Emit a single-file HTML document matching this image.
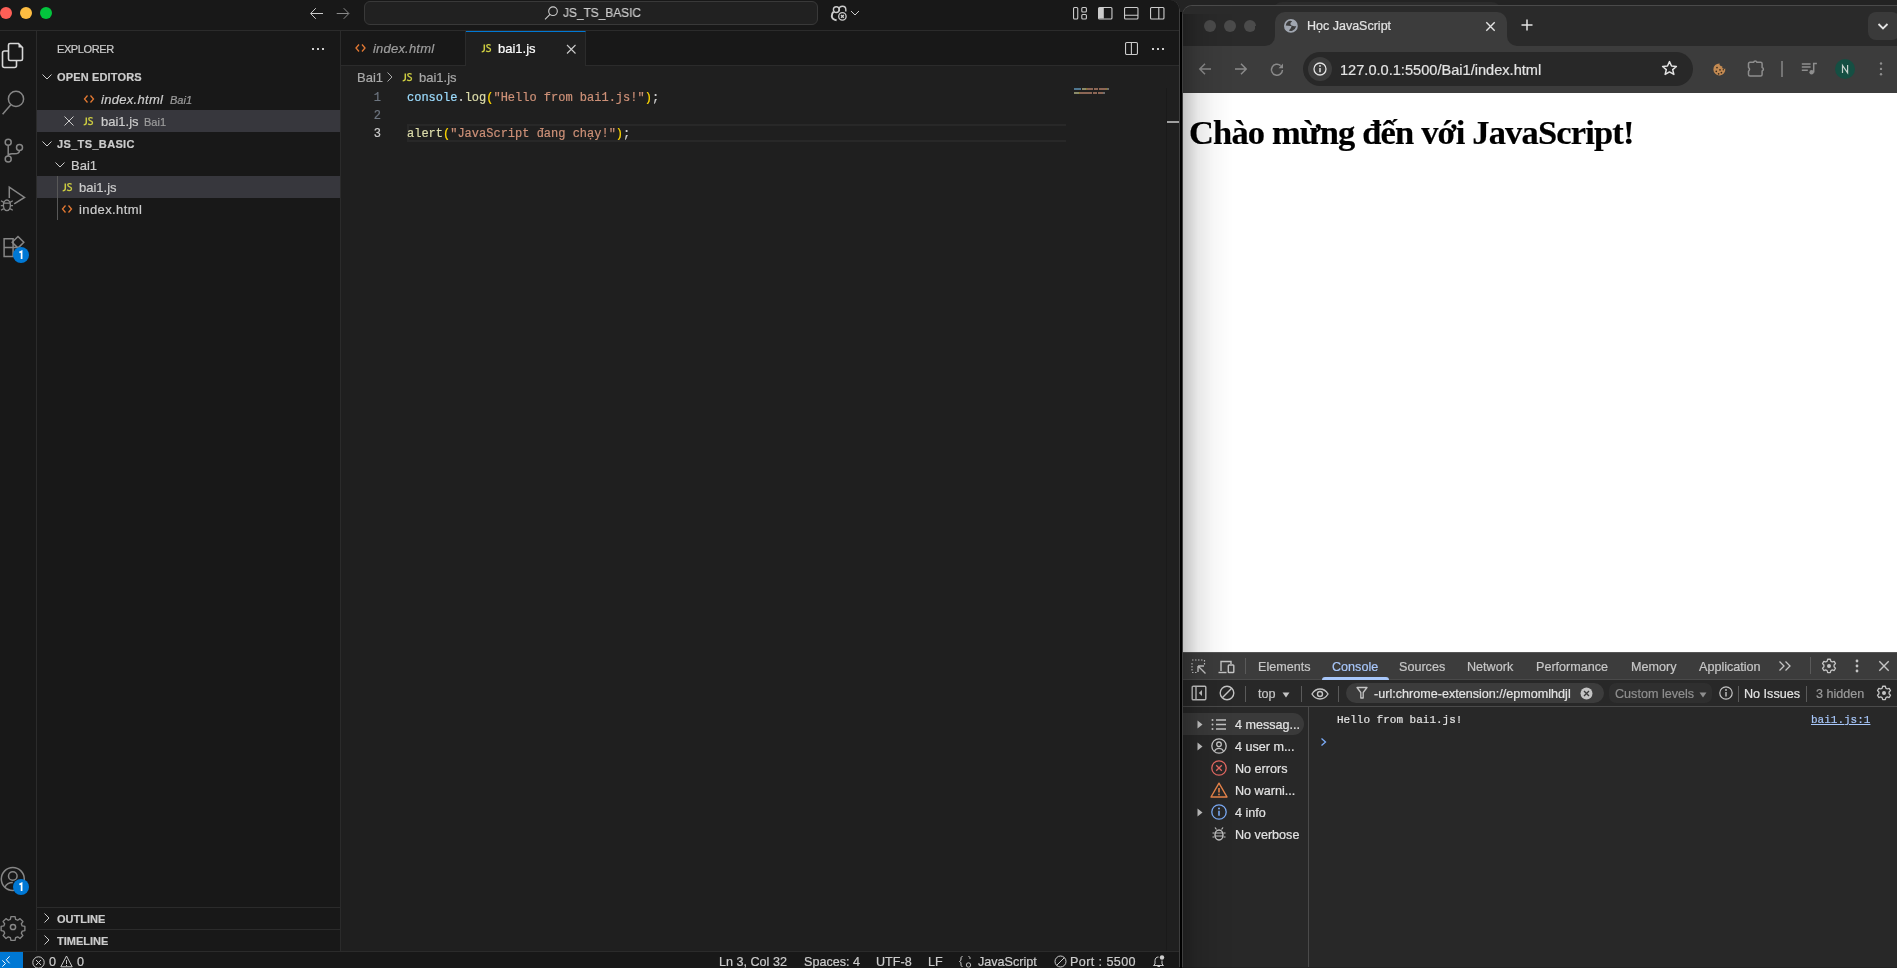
<!DOCTYPE html>
<html><head><meta charset="utf-8">
<style>
*{box-sizing:border-box;margin:0;padding:0}
html,body{width:1897px;height:968px;overflow:hidden;background:#232323;font-family:"Liberation Sans",sans-serif}
.a{position:absolute}
#vs{position:absolute;left:0;top:0;width:1180px;height:968px;background:#181818;overflow:hidden;border-top-right-radius:10px}
.t{position:absolute;white-space:nowrap;will-change:transform;-webkit-text-stroke:0.2px currentColor}
.mono{font-family:"Liberation Mono",monospace}
svg{position:absolute;overflow:visible}
#ch{position:absolute;left:1182px;top:5px;width:715px;height:962px;background:#282828;overflow:hidden;border-top-left-radius:10px;border-left:1px solid #3f3f3f;border-top:1px solid #4a4a4a}
</style></head><body>
<div id="vs">
  <!-- title bar -->
  <div class="a" style="left:0;top:0;width:1180px;height:31px;background:#181818;border-bottom:1px solid #2b2b2b"></div>
  <div class="a" style="left:0px;top:7px;width:12px;height:12px;border-radius:50%;background:#fe5f57"></div>
  <div class="a" style="left:20px;top:7px;width:12px;height:12px;border-radius:50%;background:#fdbd41"></div>
  <div class="a" style="left:40px;top:7px;width:12px;height:12px;border-radius:50%;background:#03c43d"></div>
  <svg style="left:308px;top:6px" width="18" height="16" viewBox="0 0 18 16"><path d="M15 7.5H3M7.8 2.2L2.6 7.5l5.2 5.3" fill="none" stroke="#cccccc" stroke-width="1"/></svg>
  <svg style="left:334px;top:6px" width="18" height="16" viewBox="0 0 18 16"><path d="M2.7 7.5H14.5M9.7 2.2l5.2 5.3-5.2 5.3" fill="none" stroke="#8b8b8b" stroke-width="1"/></svg>
  <div class="a" style="left:364px;top:1px;width:454px;height:24px;border:1px solid #393939;background:#212121;border-radius:6px"></div>
  <svg style="left:543px;top:5px" width="16" height="16" viewBox="0 0 16 16"><circle cx="10" cy="6.2" r="4.3" fill="none" stroke="#cccccc" stroke-width="1.1"/><path d="M7 9.3L2 14.3" stroke="#cccccc" stroke-width="1.1"/></svg>
  <div class="t" style="left:563px;top:5px;font-size:13px;line-height:16px;color:#cccccc;transform:scaleX(0.915);transform-origin:0 0">JS_TS_BASIC</div>
  <!-- copilot -->
  <svg style="left:829px;top:4px" width="20" height="20" viewBox="0 0 20 20"><circle cx="7.3" cy="5.6" r="2.9" fill="none" stroke="#cccccc" stroke-width="1.4"/><path d="M10.2 7.3V5.3Q10.2 2.3 13.5 2.3Q16.8 2.3 16.8 5.6V7.5" fill="none" stroke="#cccccc" stroke-width="1.4"/><path d="M4.6 7.8Q2.6 9.4 2.8 12.3Q3.1 15.6 7.6 16.3" fill="none" stroke="#cccccc" stroke-width="2"/><circle cx="13.4" cy="12.4" r="4.6" fill="#181818"/><circle cx="13.4" cy="12.4" r="3.7" fill="none" stroke="#cccccc" stroke-width="1.3"/><path d="M12 11l2.8 2.8M14.8 11L12 13.8" stroke="#cccccc" stroke-width="1.3"/></svg>
  <svg style="left:850px;top:9px" width="10" height="8" viewBox="0 0 10 8"><path d="M1 2l4 4 4-4" fill="none" stroke="#cccccc" stroke-width="1"/></svg>
  <!-- layout icons -->
  <svg style="left:1072.5px;top:7px" width="14" height="13" viewBox="0 0 14 13"><rect x="0.55" y="0.55" width="4.2" height="11.4" rx="1" fill="none" stroke="#cccccc" stroke-width="1.1"/><rect x="8.8" y="0.55" width="4.6" height="4.5" rx="1" fill="none" stroke="#cccccc" stroke-width="1.1"/><rect x="8.8" y="7.45" width="4.6" height="4.5" rx="1" fill="none" stroke="#cccccc" stroke-width="1.1"/></svg>
  <svg style="left:1098px;top:7px" width="15" height="13" viewBox="0 0 15 13"><rect x="0.55" y="0.55" width="13.4" height="11.4" rx="1" fill="none" stroke="#cccccc" stroke-width="1.1"/><rect x="1" y="1" width="4.8" height="10.5" fill="#cccccc"/></svg>
  <svg style="left:1124px;top:7px" width="15" height="13" viewBox="0 0 15 13"><rect x="0.55" y="0.55" width="13.4" height="11.4" rx="1" fill="none" stroke="#cccccc" stroke-width="1.1"/><path d="M1 8.2h13" stroke="#cccccc" stroke-width="1.1"/></svg>
  <svg style="left:1150px;top:7px" width="15" height="13" viewBox="0 0 15 13"><rect x="0.55" y="0.55" width="13.4" height="11.4" rx="1" fill="none" stroke="#cccccc" stroke-width="1.1"/><path d="M8.8 1v11" stroke="#cccccc" stroke-width="1.1"/></svg>

  <!-- activity bar -->
  <div class="a" style="left:0;top:31px;width:37px;height:920px;background:#181818;border-right:1px solid #2b2b2b"></div>
  <svg style="left:0;top:40px" width="26" height="30" viewBox="0 0 26 30"><path d="M9 11H4.5c-1.2 0-2 .8-2 2v12.5c0 1.2.8 2 2 2h10c1.2 0 2-.8 2-2V21" fill="none" stroke="#d7d7d7" stroke-width="1.6"/><path d="M10 3.5h8.5l4 4v11.5c0 1-.8 1.5-1.5 1.5h-11c-1 0-1.5-.6-1.5-1.5V5c0-1 .6-1.5 1.5-1.5z" fill="none" stroke="#d7d7d7" stroke-width="1.6"/><path d="M18.5 3.5v4h4z" fill="#d7d7d7"/></svg>
  <svg style="left:0;top:88px" width="26" height="28" viewBox="0 0 26 28"><circle cx="16" cy="10.9" r="7.6" fill="none" stroke="#868686" stroke-width="1.5"/><path d="M10.8 16.8L2.6 26.3" stroke="#868686" stroke-width="1.5"/></svg>
  <svg style="left:0.5px;top:136.3px" width="26" height="28" viewBox="0 0 26 28"><circle cx="7.2" cy="6.3" r="3" fill="none" stroke="#868686" stroke-width="1.5"/><circle cx="7.2" cy="23" r="3" fill="none" stroke="#868686" stroke-width="1.5"/><circle cx="18.5" cy="11.4" r="3" fill="none" stroke="#868686" stroke-width="1.5"/><path d="M7.2 9.3V20M18.5 14.4c0 2.5-2 3.3-5 3.3H11c-2 0-3.8 1-3.8 2.3" fill="none" stroke="#868686" stroke-width="1.5"/></svg>
  <svg style="left:0;top:170px" width="30" height="45" viewBox="0 0 30 45"><path d="M9.3 28V17.2l15.2 10.2-10.3 6.4" fill="none" stroke="#868686" stroke-width="1.5" stroke-linejoin="miter"/><ellipse cx="6.9" cy="35.3" rx="3.5" ry="5.3" fill="none" stroke="#868686" stroke-width="1.4"/><path d="M3.5 33.2h6.8M1 30.8l2.8 1.6M12.8 30.8l-2.8 1.6M0.8 35.6h2.6M10.4 35.6H13M1 40.2l2.8-1.6M12.8 40.2L10 38.6" stroke="#868686" stroke-width="1.3"/></svg>
  <svg style="left:0;top:232px" width="28" height="30" viewBox="0 0 28 30"><path d="M4.1 6.8h9v8.8h-9zM4.1 15.6h9v8.8h-9zM13.1 15.6h6" fill="none" stroke="#868686" stroke-width="1.5"/><path d="M18 4.5l5.8 5.8-5.8 5.8-5.8-5.8z" fill="none" stroke="#868686" stroke-width="1.5"/></svg>
  <div class="a" style="left:13px;top:247px;width:16px;height:16px;border-radius:50%;background:#0078d4;"><svg style="left:0;top:0" width="16" height="16" viewBox="0 0 16 16"><path d="M6.3 5.6L8.6 4.4V12" fill="none" stroke="#fff" stroke-width="1.7"/></svg></div>
  <svg style="left:0;top:866px" width="28" height="28" viewBox="0 0 28 28"><circle cx="12.8" cy="13" r="11.5" fill="none" stroke="#868686" stroke-width="1.5"/><circle cx="12.8" cy="10" r="4.3" fill="none" stroke="#868686" stroke-width="1.5"/><path d="M5 21c1.5-3 4.5-4.5 7.8-4.5" fill="none" stroke="#868686" stroke-width="1.5"/></svg>
  <div class="a" style="left:13px;top:879px;width:16px;height:16px;border-radius:50%;background:#0078d4;"><svg style="left:0;top:0" width="16" height="16" viewBox="0 0 16 16"><path d="M6.3 5.6L8.6 4.4V12" fill="none" stroke="#fff" stroke-width="1.7"/></svg></div>
  <svg style="left:0;top:914px" width="26" height="26" viewBox="-13 -13 26 26"><path d="M-2.3 -11.5h4.6l.6 3 2.3 1 2.6-1.8 3.2 3.2-1.8 2.6 1 2.3 3 .6v4.6l-3 .6-1 2.3 1.8 2.6-3.2 3.2-2.6-1.8-2.3 1-.6 3h-4.6l-.6-3-2.3-1-2.6 1.8-3.2-3.2 1.8-2.6-1-2.3-3-.6v-4.6l3-.6 1-2.3-1.8-2.6 3.2-3.2 2.6 1.8 2.3-1z" transform="scale(0.9)" fill="none" stroke="#868686" stroke-width="1.5" stroke-linejoin="round"/><circle cx="0" cy="0" r="2.6" fill="none" stroke="#868686" stroke-width="1.5"/></svg>

  <!-- sidebar -->
  <div class="a" style="left:37px;top:31px;width:304px;height:920px;background:#181818;border-right:1px solid #2b2b2b"></div>
  <div class="t" style="left:57px;top:43px;font-size:11px;line-height:12px;color:#cccccc;letter-spacing:-0.4px">EXPLORER</div>
  <svg style="left:311px;top:45px" width="16" height="8"><rect x="1" y="3" width="2" height="2" fill="#cccccc"/><rect x="6" y="3" width="2" height="2" fill="#cccccc"/><rect x="11" y="3" width="2" height="2" fill="#cccccc"/></svg>
  <svg style="left:41px;top:71px" width="12" height="12" viewBox="0 0 12 12"><path d="M1.5 3.5L6 8l4.5-4.5" fill="none" stroke="#cccccc" stroke-width="1"/></svg>
  <div class="t" style="left:57px;top:71px;font-size:11px;line-height:12px;font-weight:bold;color:#cccccc;letter-spacing:0.15px">OPEN EDITORS</div>
  <svg style="left:83px;top:93px" width="12" height="12" viewBox="0 0 12 12"><path d="M4.5 2.5L1.5 6l3 3.5M7.5 2.5l3 3.5-3 3.5" fill="none" stroke="#e37933" stroke-width="1.3"/></svg>
  <div class="t" style="left:101px;top:92px;font-size:13px;line-height:15px;font-style:italic;color:#cccccc;letter-spacing:0.3px">index.html</div>
  <div class="t" style="left:170px;top:94px;font-size:11px;line-height:12px;font-style:italic;color:#9d9d9d">Bai1</div>
  <div class="a" style="left:37px;top:110px;width:303px;height:22px;background:#37373d"></div>
  <svg style="left:63px;top:115px" width="12" height="12" viewBox="0 0 12 12"><path d="M1.5 1.5l9 9M10.5 1.5l-9 9" stroke="#cccccc" stroke-width="1"/></svg>
  <svg style="left:83px;top:117px" width="11" height="8.5" viewBox="0 0 11 9" preserveAspectRatio="none"><path d="M3.3 0.4V5.8Q3.3 8.2 0.7 8.2" fill="none" stroke="#cbcb41" stroke-width="1.5"/><path d="M9.6 1.4Q8.8 0.5 7.4 0.6Q5.7 0.7 5.8 2.2Q5.9 3.5 7.6 4.1Q9.6 4.8 9.5 6.3Q9.3 8.1 7.3 8.1Q5.9 8.1 5.1 7.2" fill="none" stroke="#cbcb41" stroke-width="1.4"/></svg>
  <div class="t" style="left:101px;top:114px;font-size:13px;line-height:15px;color:#cccccc">bai1.js</div>
  <div class="t" style="left:144px;top:116px;font-size:11px;line-height:12px;color:#9d9d9d">Bai1</div>
  <svg style="left:41px;top:138px" width="12" height="12" viewBox="0 0 12 12"><path d="M1.5 3.5L6 8l4.5-4.5" fill="none" stroke="#cccccc" stroke-width="1"/></svg>
  <div class="t" style="left:57px;top:138px;font-size:11px;line-height:12px;font-weight:bold;color:#cccccc;letter-spacing:0.35px">JS_TS_BASIC</div>
  <svg style="left:54px;top:159px" width="12" height="12" viewBox="0 0 12 12"><path d="M1.5 3.5L6 8l4.5-4.5" fill="none" stroke="#cccccc" stroke-width="1"/></svg>
  <div class="t" style="left:71px;top:158px;font-size:13px;line-height:15px;color:#cccccc">Bai1</div>
  <div class="a" style="left:37px;top:176px;width:303px;height:22px;background:#37373d"></div>
  <div class="a" style="left:57px;top:176px;width:1px;height:44px;background:#585858"></div>
  <svg style="left:62px;top:183px" width="11" height="8.5" viewBox="0 0 11 9" preserveAspectRatio="none"><path d="M3.3 0.4V5.8Q3.3 8.2 0.7 8.2" fill="none" stroke="#cbcb41" stroke-width="1.5"/><path d="M9.6 1.4Q8.8 0.5 7.4 0.6Q5.7 0.7 5.8 2.2Q5.9 3.5 7.6 4.1Q9.6 4.8 9.5 6.3Q9.3 8.1 7.3 8.1Q5.9 8.1 5.1 7.2" fill="none" stroke="#cbcb41" stroke-width="1.4"/></svg>
  <div class="t" style="left:79px;top:180px;font-size:13px;line-height:15px;color:#cccccc">bai1.js</div>
  <svg style="left:61px;top:203px" width="12" height="12" viewBox="0 0 12 12"><path d="M4.5 2.5L1.5 6l3 3.5M7.5 2.5l3 3.5-3 3.5" fill="none" stroke="#e37933" stroke-width="1.3"/></svg>
  <div class="t" style="left:79px;top:202px;font-size:13px;line-height:15px;color:#cccccc;letter-spacing:0.4px">index.html</div>
  <div class="a" style="left:37px;top:907px;width:303px;height:1px;background:#2b2b2b"></div>
  <svg style="left:41px;top:912px" width="12" height="12" viewBox="0 0 12 12"><path d="M3.5 1.5L8 6l-4.5 4.5" fill="none" stroke="#cccccc" stroke-width="1"/></svg>
  <div class="t" style="left:57px;top:913px;font-size:11px;line-height:12px;font-weight:bold;color:#cccccc">OUTLINE</div>
  <div class="a" style="left:37px;top:929px;width:303px;height:1px;background:#2b2b2b"></div>
  <svg style="left:41px;top:934px" width="12" height="12" viewBox="0 0 12 12"><path d="M3.5 1.5L8 6l-4.5 4.5" fill="none" stroke="#cccccc" stroke-width="1"/></svg>
  <div class="t" style="left:57px;top:935px;font-size:11px;line-height:12px;font-weight:bold;color:#cccccc">TIMELINE</div>

  <!-- editor -->
  <div class="a" style="left:341px;top:31px;width:839px;height:920px;background:#1f1f1f"></div>
  <div class="a" style="left:341px;top:31px;width:839px;height:35px;background:#181818;border-bottom:1px solid #2b2b2b"></div>
  <div class="a" style="left:341px;top:31px;width:125px;height:34px;border-right:1px solid #2b2b2b"></div>
  <svg style="left:354px;top:42px" width="13" height="12" viewBox="0 0 12 12"><path d="M4.5 2.5L1.5 6l3 3.5M7.5 2.5l3 3.5-3 3.5" fill="none" stroke="#e37933" stroke-width="1.3"/></svg>
  <div class="t" style="left:373px;top:41px;font-size:13px;line-height:15px;font-style:italic;color:#9d9d9d;letter-spacing:0.2px">index.html</div>
  <div class="a" style="left:466px;top:31px;width:120px;height:35px;background:#1f1f1f;border-right:1px solid #2b2b2b;border-top:1px solid #0078d4"></div>
  <svg style="left:481px;top:44px" width="11" height="8.5" viewBox="0 0 11 9" preserveAspectRatio="none"><path d="M3.3 0.4V5.8Q3.3 8.2 0.7 8.2" fill="none" stroke="#cbcb41" stroke-width="1.5"/><path d="M9.6 1.4Q8.8 0.5 7.4 0.6Q5.7 0.7 5.8 2.2Q5.9 3.5 7.6 4.1Q9.6 4.8 9.5 6.3Q9.3 8.1 7.3 8.1Q5.9 8.1 5.1 7.2" fill="none" stroke="#cbcb41" stroke-width="1.4"/></svg>
  <div class="t" style="left:498px;top:41px;font-size:13px;line-height:15px;color:#ffffff">bai1.js</div>
  <svg style="left:565px;top:43px" width="12" height="12" viewBox="0 0 12 12"><path d="M2 2l8.5 8.5M10.5 2L2 10.5" stroke="#cccccc" stroke-width="1.1"/></svg>
  <svg style="left:1125px;top:42px" width="13" height="13" viewBox="0 0 13 13"><rect x="0.55" y="0.55" width="11.9" height="11.9" rx="1.2" fill="none" stroke="#cccccc" stroke-width="1.1"/><path d="M6.4 1v11" stroke="#cccccc" stroke-width="1.1"/></svg>
  <svg style="left:1151px;top:45px" width="16" height="8"><rect x="1" y="3" width="2" height="2" fill="#cccccc"/><rect x="6" y="3" width="2" height="2" fill="#cccccc"/><rect x="11" y="3" width="2" height="2" fill="#cccccc"/></svg>
  <!-- breadcrumbs -->
  <div class="t" style="left:357px;top:70px;font-size:13px;line-height:15px;color:#a9a9a9">Bai1</div>
  <svg style="left:385px;top:71px" width="10" height="12" viewBox="0 0 10 12"><path d="M2.5 1.5L7 6l-4.5 4.5" fill="none" stroke="#a9a9a9" stroke-width="1"/></svg>
  <svg style="left:402px;top:73px" width="11" height="8.5" viewBox="0 0 11 9" preserveAspectRatio="none"><path d="M3.3 0.4V5.8Q3.3 8.2 0.7 8.2" fill="none" stroke="#cbcb41" stroke-width="1.5"/><path d="M9.6 1.4Q8.8 0.5 7.4 0.6Q5.7 0.7 5.8 2.2Q5.9 3.5 7.6 4.1Q9.6 4.8 9.5 6.3Q9.3 8.1 7.3 8.1Q5.9 8.1 5.1 7.2" fill="none" stroke="#cbcb41" stroke-width="1.4"/></svg>
  <div class="t" style="left:419px;top:70px;font-size:13px;line-height:15px;color:#a9a9a9">bai1.js</div>
  <!-- code -->
  <div class="a" style="left:407px;top:124px;width:659px;height:18px;border:2px solid #282828;border-right:none"></div>
  <div class="t mono" style="left:340px;top:89px;width:41px;text-align:right;font-size:12px;line-height:18px;color:#6e7681">1<br>2<br><span style="color:#cccccc">3</span></div>
  <div class="t mono" style="left:407px;top:89px;font-size:12px;line-height:18px;color:#cccccc"><span style="color:#9cdcfe">console</span>.<span style="color:#dcdcaa">log</span><span style="color:#ffd700">(</span><span style="color:#ce9178">"Hello from bai1.js!"</span><span style="color:#ffd700">)</span>;<br><br><span style="color:#dcdcaa">alert</span><span style="color:#ffd700">(</span><span style="color:#ce9178">"JavaScript đang chạy!"</span><span style="color:#ffd700">)</span>;</div>
  <!-- minimap -->
  <div class="a" style="left:1074px;top:88px;width:7px;height:2px;background:#4f7790"></div><div class="a" style="left:1082px;top:88px;width:4px;height:2px;background:#8a8a6a"></div><div class="a" style="left:1086px;top:88px;width:1px;height:2px;background:#8a7a30"></div><div class="a" style="left:1087px;top:88px;width:6px;height:2px;background:#8c6655"></div><div class="a" style="left:1094px;top:88px;width:4px;height:2px;background:#8c6655"></div><div class="a" style="left:1099px;top:88px;width:7px;height:2px;background:#8c6655"></div><div class="a" style="left:1106px;top:88px;width:1px;height:2px;background:#8a7a30"></div><div class="a" style="left:1107px;top:88px;width:2px;height:2px;background:#6e6e6e"></div><div class="a" style="left:1074px;top:92px;width:5px;height:2px;background:#8a8a6a"></div><div class="a" style="left:1079px;top:92px;width:1px;height:2px;background:#8a7a30"></div><div class="a" style="left:1080px;top:92px;width:12px;height:2px;background:#8c6655"></div><div class="a" style="left:1093px;top:92px;width:4px;height:2px;background:#8c6655"></div><div class="a" style="left:1098px;top:92px;width:5px;height:2px;background:#8c6655"></div><div class="a" style="left:1103px;top:92px;width:2px;height:2px;background:#6e6e6e"></div>
  <div class="a" style="left:1166px;top:88px;width:1px;height:863px;background:#1a1a1a"></div>
  <div class="a" style="left:1167px;top:121px;width:13px;height:2px;background:#a0a0a0"></div>
  <!-- status bar -->
  <div class="a" style="left:0;top:951px;width:1180px;height:22px;background:#181818;border-top:1px solid #2b2b2b"></div>
  <div class="a" style="left:0;top:952px;width:23px;height:20px;background:#0078d4"></div>
  <svg style="left:0;top:952px" width="16" height="16" viewBox="0 0 16 16"><path d="M2.3 8.4L5.5 11.5 2.3 14.6M9.6 4.3L6.3 7.8l3.3 3.5" fill="none" stroke="#fff" stroke-width="1"/></svg>
  <svg style="left:31.7px;top:955.5px" width="13" height="13" viewBox="0 0 13 13"><circle cx="6.5" cy="6.5" r="5.7" fill="none" stroke="#cccccc" stroke-width="1"/><path d="M4 4l5 5M9 4l-5 5" stroke="#cccccc" stroke-width="1"/></svg>
  <div class="t" style="left:49px;top:955px;font-size:12.6px;line-height:14px;color:#cccccc">0</div>
  <svg style="left:60px;top:955px" width="13" height="13" viewBox="0 0 13 13"><path d="M6.5 1L12.2 11.8H0.8z" fill="none" stroke="#cccccc" stroke-width="1"/><path d="M6.5 5v4M6.5 10v1" stroke="#cccccc" stroke-width="1"/></svg>
  <div class="t" style="left:77px;top:955px;font-size:12.6px;line-height:14px;color:#cccccc">0</div>
  <div class="t" style="left:719px;top:955px;font-size:12.6px;line-height:14px;color:#cccccc">Ln 3, Col 32</div>
  <div class="t" style="left:804px;top:955px;font-size:12.6px;line-height:14px;color:#cccccc">Spaces: 4</div>
  <div class="t" style="left:876px;top:955px;font-size:12.6px;line-height:14px;color:#cccccc">UTF-8</div>
  <div class="t" style="left:928px;top:955px;font-size:12.6px;line-height:14px;color:#cccccc">LF</div>
  <svg style="left:959px;top:955px" width="13" height="13" viewBox="0 0 13 13"><path d="M3.5 1.5C2 1.5 2 2.5 2 4s-1 2.5-1.5 2.5C1 6.5 2 7 2 9s0 2.5 1.5 2.5M9.5 1.5c1.5 0 1.5 1 1.5 2.5" fill="none" stroke="#cccccc" stroke-width="1"/><circle cx="9.5" cy="10" r="2.2" fill="none" stroke="#cccccc" stroke-width="0.9"/></svg>
  <div class="t" style="left:978px;top:955px;font-size:12.6px;line-height:14px;color:#cccccc">JavaScript</div>
  <svg style="left:1054px;top:955px" width="13" height="13" viewBox="0 0 13 13"><circle cx="6.5" cy="6.5" r="5.5" fill="none" stroke="#cccccc" stroke-width="1"/><path d="M2.6 10.4l7.8-7.8" stroke="#cccccc" stroke-width="1"/></svg>
  <div class="t" style="left:1070px;top:955px;font-size:12.6px;line-height:14px;color:#cccccc;letter-spacing:0.4px">Port : 5500</div>
  <svg style="left:1152px;top:954px" width="14" height="14" viewBox="0 0 14 14"><path d="M3 10V6.5C3 4.3 4.5 3 6.5 3M10 6.5V10l1.5 1.5h-10L3 10M5.5 12.5h2.5" fill="none" stroke="#cccccc" stroke-width="1"/><circle cx="10" cy="3.5" r="2.2" fill="#cccccc"/></svg>
  <div class="a" style="left:1150px;top:0;width:30px;height:968px;border-right:1px solid #3d3d3d;border-top:1px solid #3d3d3d;border-top-right-radius:10px;top:-1px"></div>
</div>

<div id="bgtop" class="a" style="left:1180px;top:0;width:717px;height:12px;background:#232323"></div><div class="a" style="left:1180px;top:12px;width:2px;height:956px;background:#000"></div>
<div class="a" style="left:1274px;top:2px;width:226px;height:10px;background:#2b2b2b;border-radius:8px 8px 0 0"></div>
<div id="ch">
  <!-- tab strip -->
  <div class="a" style="left:0;top:0;width:715px;height:40px;background:#2a2a2a"></div>
  
  <div class="a" style="left:21px;top:14px;width:12px;height:12px;border-radius:50%;background:#4b4b4b"></div>
  <div class="a" style="left:41px;top:14px;width:12px;height:12px;border-radius:50%;background:#4b4b4b"></div>
  <div class="a" style="left:61px;top:14px;width:12px;height:12px;border-radius:50%;background:#4b4b4b"></div>
  <!-- active tab -->
  <div class="a" style="left:92px;top:6px;width:232px;height:40px;background:#3c3c3c;border-radius:10px 10px 0 0"></div>
  <div class="a" style="left:82px;top:30px;width:10px;height:10px;background:#3c3c3c"></div>
  <div class="a" style="left:72px;top:20px;width:20px;height:20px;background:#2a2a2a;border-radius:0 0 10px 0"></div>
  <div class="a" style="left:324px;top:30px;width:10px;height:10px;background:#3c3c3c"></div>
  <div class="a" style="left:324px;top:20px;width:20px;height:20px;background:#2a2a2a;border-radius:0 0 0 10px"></div>
  <svg style="left:101px;top:13px" width="14" height="14" viewBox="0 0 14 14"><circle cx="6.9" cy="6.9" r="6.9" fill="#a0a6b0"/><path d="M1.7 6.6Q2 3.6 4 2.4Q5.8 1.4 8.2 2.2Q6 3.6 6.4 5Q6.9 6.4 8 6.9Q5 7 1.7 6.6Z" fill="#3c3c3c"/><path d="M4.8 11.6Q6.5 12.3 8.3 11.7Q11.3 10.5 12.3 7.2Q10.5 7.5 9.3 7.1Q8.2 6.8 7.6 6.6Q7.3 8.5 6.6 9.5Q5.8 10.6 4.8 11.6Z" fill="#3c3c3c"/></svg>
  <div class="t" style="left:124px;top:12px;font-size:12.5px;line-height:16px;color:#e3e3e3">Học JavaScript</div>
  <svg style="left:302px;top:15px" width="11" height="11" viewBox="0 0 11 11"><path d="M1.3 1.3l8.4 8.4M9.7 1.3l-8.4 8.4" stroke="#e3e3e3" stroke-width="1.4"/></svg>
  <svg style="left:337px;top:12px" width="14" height="14" viewBox="0 0 14 14"><path d="M7 1.5v11M1.5 7h11" stroke="#e3e3e3" stroke-width="1.5"/></svg>
  <div class="a" style="left:685px;top:6px;width:32px;height:28px;background:#3a3a3a;border-radius:8px"></div>
  <svg style="left:693px;top:14px" width="14" height="12" viewBox="0 0 14 12"><path d="M2.5 4l4.5 4.5L11.5 4" fill="none" stroke="#e3e3e3" stroke-width="1.8"/></svg>
  <!-- toolbar -->
  <div class="a" style="left:0;top:40px;width:715px;height:47px;background:#3c3c3c"></div>
  <svg style="left:14px;top:55px" width="16" height="16" viewBox="0 0 16 16"><path d="M14 8H3M8 2.8L2.8 8 8 13.2" fill="none" stroke="#8a8a8a" stroke-width="1.5"/></svg>
  <svg style="left:50px;top:55px" width="16" height="16" viewBox="0 0 16 16"><path d="M2 8h11M8 2.8L13.2 8 8 13.2" fill="none" stroke="#8a8a8a" stroke-width="1.5"/></svg>
  <svg style="left:86px;top:55px" width="16" height="16" viewBox="0 0 16 16"><path d="M13.5 9A5.5 5.5 0 1 1 11.6 4.6" fill="none" stroke="#8a8a8a" stroke-width="1.5"/><path d="M9.6 7.2H14V2.6z" fill="#8a8a8a"/></svg>
  <div class="a" style="left:120px;top:46px;width:390px;height:34px;background:#282828;border-radius:17px"></div>
  <div class="a" style="left:125px;top:51px;width:24px;height:24px;background:#3c3c3c;border-radius:50%"></div>
  <svg style="left:130px;top:56px" width="14" height="14" viewBox="0 0 14 14"><circle cx="7" cy="7" r="6" fill="none" stroke="#e3e3e3" stroke-width="1.3"/><path d="M7 6v4.2" stroke="#e3e3e3" stroke-width="1.5"/><circle cx="7" cy="3.9" r="0.9" fill="#e3e3e3"/></svg>
  <div class="t" style="left:157px;top:55px;font-size:14.6px;line-height:18px;color:#e3e3e3">127.0.0.1:5500/Bai1/index.html</div>
  <svg style="left:478px;top:54px" width="17" height="17" viewBox="0 0 16 16"><path d="M8 1.5l1.9 4.2 4.6.4-3.5 3 1.1 4.5L8 11.2l-4.1 2.4 1.1-4.5-3.5-3 4.6-.4z" fill="none" stroke="#e3e3e3" stroke-width="1.4" stroke-linejoin="round"/></svg>
  <svg style="left:530px;top:57px" width="14" height="14" viewBox="0 0 14 14"><path d="M12.3 5.6A6 6 0 1 1 6.6 0.4A2.2 2.2 0 0 0 9.3 3.2A2 2 0 0 0 12.3 5.6z" fill="#c38a52"/><circle cx="4" cy="4.6" r="0.85" fill="#3a2a1c"/><circle cx="7" cy="6.8" r="0.85" fill="#3a2a1c"/><circle cx="3.3" cy="8.3" r="0.85" fill="#3a2a1c"/><circle cx="8.4" cy="9.6" r="0.85" fill="#3a2a1c"/><circle cx="5.6" cy="10.8" r="0.85" fill="#3a2a1c"/><circle cx="10.3" cy="6.8" r="0.7" fill="#3a2a1c"/></svg>
  <svg style="left:564px;top:53px" width="18" height="19" viewBox="0 0 18 19"><path d="M1.5 4.8Q1.5 3.3 3 3.3H6.6A1.7 1.7 0 0 1 9.9 3.3H13.6Q15.1 3.3 15.1 4.8V8.6A1.7 1.7 0 0 1 15.1 11.9V15.6Q15.1 17.1 13.6 17.1H3Q1.5 17.1 1.5 15.6V12.3Q3.6 10.3 1.5 8.4Z" fill="none" stroke="#8e8e8e" stroke-width="1.5" stroke-linejoin="round"/></svg>
  <div class="a" style="left:598.3px;top:55px;width:1.6px;height:15.5px;background:#747474"></div>
  <svg style="left:618px;top:56px" width="18" height="16" viewBox="0 0 18 16"><path d="M0.8 2h8.8M0.8 5.1h8.8M0.8 8.2h6" stroke="#8e8e8e" stroke-width="1.5"/><path d="M12.7 10.5V1.5h3.2" fill="none" stroke="#8e8e8e" stroke-width="1.5"/><circle cx="10.6" cy="10.3" r="2.2" fill="#8e8e8e"/></svg>
  <div class="a" style="left:652px;top:53px;width:20px;height:20px;background:#154f43;border-radius:50%"></div>
  <svg style="left:652px;top:53px" width="20" height="20" viewBox="0 0 20 20"><path d="M7.5 14V6.4l5.1 7.4V6" fill="none" stroke="#c8d3ce" stroke-width="1.2" stroke-linejoin="miter"/></svg>
  <svg style="left:695px;top:55px" width="6" height="18" viewBox="0 0 6 18"><circle cx="3" cy="2.5" r="1.2" fill="#8e8e8e"/><circle cx="3" cy="7.9" r="1.2" fill="#8e8e8e"/><circle cx="3" cy="13.3" r="1.2" fill="#8e8e8e"/></svg>
  <!-- page -->
  <div class="a" style="left:0;top:87px;width:715px;height:559px;background:#ffffff"></div>
  <div class="t" style="left:6px;top:106px;font-family:'Liberation Serif',serif;font-size:34.5px;line-height:40px;font-weight:bold;color:#000;letter-spacing:-0.85px">Chào mừng đến với JavaScript!</div>
  <!-- devtools -->
  <div class="a" style="left:0;top:646px;width:714px;height:316px;background:#282828"></div>
  <div class="a" style="left:0;top:646px;width:715px;height:28px;background:#3c3c3c;border-bottom:1px solid #4a4a4a;border-top:1px solid #575757"></div>
  <div class="a" style="left:0;top:674px;width:714px;height:27px;background:#282828;border-bottom:1px solid #4a4a4a"></div>
  <div class="a" style="left:125px;top:701px;width:1px;height:262px;background:#4a4a4a"></div>
  <!-- tab row icons -->
  <svg style="left:8px;top:653px" width="16" height="16" viewBox="0 0 16 16"><path d="M1 1h1.5M4 1h1.5M7 1h1.5M10 1h1.5M13.5 1v1.5M1 4v1.5M1 7v1.5M1 10v1.5M1 13.5h1.5M4 13.5h1.5M13.5 4v1.5" stroke="#c4c4c4" stroke-width="1.2"/><path d="M7 7h6M7 7v6M7 7l7.5 7.5" fill="none" stroke="#c4c4c4" stroke-width="1.4"/></svg>
  <svg style="left:35px;top:653px" width="18" height="16" viewBox="0 0 18 16"><path d="M3 12V2.5h10V5" fill="none" stroke="#c4c4c4" stroke-width="1.4"/><path d="M0.5 13.5h8" stroke="#c4c4c4" stroke-width="1.4"/><rect x="10.3" y="6" width="5.5" height="7.5" rx="0.8" fill="none" stroke="#c4c4c4" stroke-width="1.4"/></svg>
  <div class="a" style="left:62px;top:652px;width:1px;height:16px;background:#5a5a5a"></div>
  <div class="t" style="left:75px;top:653px;font-size:12.6px;line-height:16px;color:#c7c7c7">Elements</div>
  <div class="t" style="left:149px;top:653px;font-size:12.6px;line-height:16px;color:#a8c7fa">Console</div>
  <div class="a" style="left:139px;top:671px;width:67px;height:3px;background:#a8c7fa;border-radius:3px 3px 0 0"></div>
  <div class="t" style="left:216px;top:653px;font-size:12.6px;line-height:16px;color:#c7c7c7">Sources</div>
  <div class="t" style="left:284px;top:653px;font-size:12.6px;line-height:16px;color:#c7c7c7">Network</div>
  <div class="t" style="left:353px;top:653px;font-size:12.6px;line-height:16px;color:#c7c7c7">Performance</div>
  <div class="t" style="left:448px;top:653px;font-size:12.6px;line-height:16px;color:#c7c7c7">Memory</div>
  <div class="t" style="left:516px;top:653px;font-size:12.6px;line-height:16px;color:#c7c7c7">Application</div>
  <svg style="left:595px;top:654px" width="14" height="12" viewBox="0 0 14 12"><path d="M1.5 1.5L6 6l-4.5 4.5M7.5 1.5L12 6l-4.5 4.5" fill="none" stroke="#c4c4c4" stroke-width="1.3"/></svg>
  <div class="a" style="left:627px;top:651px;width:1px;height:17px;background:#5a5a5a"></div>
  <svg style="left:638px;top:652px" width="16" height="16" viewBox="-8 -8 16 16"><path transform="scale(0.94)" d="M-1.4 -7.2h2.8l.5 2 1.6.9 2-.6 1.4 2.4-1.5 1.5v1.9l1.5 1.5-1.4 2.4-2-.6-1.6.9-.5 2h-2.8l-.5-2-1.6-.9-2 .6-1.4-2.4 1.5-1.5v-1.9l-1.5-1.5 1.4-2.4 2 .6 1.6-.9z" fill="none" stroke="#c4c4c4" stroke-width="1.4" stroke-linejoin="round"/><circle r="2" fill="#c4c4c4"/></svg>
  <svg style="left:669px;top:652px" width="10" height="16" viewBox="0 0 10 16"><circle cx="5" cy="3" r="1.4" fill="#c4c4c4"/><circle cx="5" cy="8" r="1.4" fill="#c4c4c4"/><circle cx="5" cy="13" r="1.4" fill="#c4c4c4"/></svg>
  <svg style="left:695px;top:654px" width="12" height="12" viewBox="0 0 12 12"><path d="M1.3 1.3l9.4 9.4M10.7 1.3l-9.4 9.4" stroke="#c4c4c4" stroke-width="1.4"/></svg>
  <!-- console toolbar -->
  <svg style="left:8px;top:679px" width="16" height="16" viewBox="0 0 16 16"><rect x="1.2" y="1.2" width="13.6" height="13.6" rx="1" fill="none" stroke="#c4c4c4" stroke-width="1.4"/><path d="M5 1.5v13" stroke="#c4c4c4" stroke-width="1.4"/><path d="M11 5v6L7.8 8z" fill="#c4c4c4"/></svg>
  <svg style="left:36px;top:679px" width="16" height="16" viewBox="0 0 16 16"><circle cx="8" cy="8" r="6.8" fill="none" stroke="#c4c4c4" stroke-width="1.4"/><path d="M3.3 12.7l9.4-9.4" stroke="#c4c4c4" stroke-width="1.4"/></svg>
  <div class="a" style="left:62px;top:680px;width:1px;height:16px;background:#5a5a5a"></div>
  <div class="t" style="left:75px;top:680px;font-size:12.6px;line-height:16px;color:#c7c7c7">top</div>
  <svg style="left:99px;top:686px" width="8" height="6" viewBox="0 0 8 6"><path d="M0.5 0.5h7L4 5.5z" fill="#c4c4c4"/></svg>
  <div class="a" style="left:118px;top:680px;width:1px;height:16px;background:#5a5a5a"></div>
  <svg style="left:128px;top:682px" width="18" height="12" viewBox="0 0 18 12"><path d="M1 6c2-3.3 4.8-5 8-5s6 1.7 8 5c-2 3.3-4.8 5-8 5S3 9.3 1 6z" fill="none" stroke="#c4c4c4" stroke-width="1.4"/><circle cx="9" cy="6" r="2.5" fill="none" stroke="#c4c4c4" stroke-width="1.4"/></svg>
  <div class="a" style="left:155px;top:680px;width:1px;height:16px;background:#5a5a5a"></div>
  <div class="a" style="left:163px;top:677px;width:258px;height:20px;background:#3c3c3c;border-radius:10px"></div>
  <svg style="left:173px;top:680px" width="12" height="13" viewBox="0 0 12 13"><path d="M1 1.5h10L7.2 6.5V12H4.8V6.5z" fill="none" stroke="#c4c4c4" stroke-width="1.3" stroke-linejoin="round"/></svg>
  <div class="a" style="left:191px;top:680px;width:203px;height:16px;overflow:hidden"><div class="t" style="left:0;top:0;font-size:12.6px;line-height:16px;color:#e3e3e3">-url:chrome-extension://epmomlhdjl</div></div>
  <svg style="left:397px;top:681px" width="13" height="13" viewBox="0 0 13 13"><circle cx="6.5" cy="6.5" r="6" fill="#c4c4c4"/><path d="M4 4l5 5M9 4l-5 5" stroke="#3c3c3c" stroke-width="1.4"/></svg>
  <div class="a" style="left:426px;top:677px;width:103px;height:20px;background:#2f2f2f;border-radius:7px"></div>
  <div class="t" style="left:432px;top:680px;font-size:12.6px;line-height:16px;color:#8f8f8f">Custom levels</div>
  <svg style="left:516px;top:686px" width="8" height="6" viewBox="0 0 8 6"><path d="M0.5 0.5h7L4 5.5z" fill="#8f8f8f"/></svg>
  <svg style="left:536px;top:680px" width="14" height="14" viewBox="0 0 14 14"><circle cx="7" cy="7" r="6.2" fill="none" stroke="#c4c4c4" stroke-width="1.2"/><path d="M7 6v4.5" stroke="#c4c4c4" stroke-width="1.4"/><circle cx="7" cy="4" r="0.9" fill="#c4c4c4"/></svg>
  <div class="a" style="left:555px;top:680px;width:1px;height:16px;background:#5a5a5a"></div>
  <div class="t" style="left:561px;top:680px;font-size:12.6px;line-height:16px;color:#e3e3e3">No Issues</div>
  <div class="a" style="left:623px;top:680px;width:1px;height:16px;background:#5a5a5a"></div>
  <div class="t" style="left:633px;top:680px;font-size:12.6px;line-height:16px;color:#9a9a9a">3 hidden</div>
  <svg style="left:693px;top:679px" width="16" height="16" viewBox="-8 -8 16 16"><path transform="scale(0.94)" d="M-1.4 -7.2h2.8l.5 2 1.6.9 2-.6 1.4 2.4-1.5 1.5v1.9l1.5 1.5-1.4 2.4-2-.6-1.6.9-.5 2h-2.8l-.5-2-1.6-.9-2 .6-1.4-2.4 1.5-1.5v-1.9l-1.5-1.5 1.4-2.4 2 .6 1.6-.9z" fill="none" stroke="#c4c4c4" stroke-width="1.4" stroke-linejoin="round"/><circle r="2" fill="#c4c4c4"/></svg>
  <!-- sidebar -->
  <div class="a" style="left:-10px;top:707px;width:131px;height:22px;background:#3a3a3a;border-radius:11px"></div>
  <svg style="left:14px;top:714px" width="6" height="9" viewBox="0 0 6 9"><path d="M0.5 0.5l5 4-5 4z" fill="#c4c4c4"/></svg>
  <svg style="left:28px;top:712px" width="16" height="13" viewBox="0 0 16 13"><path d="M5 2h10M5 6.5h10M5 11h10" stroke="#c4c4c4" stroke-width="1.4"/><circle cx="1.5" cy="2" r="1" fill="#c4c4c4"/><circle cx="1.5" cy="6.5" r="1" fill="#c4c4c4"/><circle cx="1.5" cy="11" r="1" fill="#c4c4c4"/></svg>
  <div class="t" style="left:52px;top:711px;font-size:12.6px;line-height:16px;color:#e3e3e3">4 messag...</div>
  <svg style="left:14px;top:736px" width="6" height="9" viewBox="0 0 6 9"><path d="M0.5 0.5l5 4-5 4z" fill="#c4c4c4"/></svg>
  <svg style="left:28px;top:732px" width="16" height="16" viewBox="0 0 16 16"><circle cx="8" cy="8" r="7.2" fill="none" stroke="#c4c4c4" stroke-width="1.3"/><circle cx="8" cy="6.3" r="2.3" fill="none" stroke="#c4c4c4" stroke-width="1.3"/><path d="M3.5 13c1-1.8 2.6-2.7 4.5-2.7s3.5.9 4.5 2.7" fill="none" stroke="#c4c4c4" stroke-width="1.3"/></svg>
  <div class="t" style="left:52px;top:733px;font-size:12.6px;line-height:16px;color:#e3e3e3">4 user m...</div>
  <svg style="left:28px;top:754px" width="16" height="16" viewBox="0 0 16 16"><circle cx="8" cy="8" r="7.2" fill="none" stroke="#e46962" stroke-width="1.3"/><path d="M5.2 5.2l5.6 5.6M10.8 5.2l-5.6 5.6" stroke="#e46962" stroke-width="1.3"/></svg>
  <div class="t" style="left:52px;top:755px;font-size:12.6px;line-height:16px;color:#e3e3e3">No errors</div>
  <svg style="left:27px;top:776px" width="18" height="16" viewBox="0 0 18 16"><path d="M9 1.2L17 15H1z" fill="none" stroke="#e8844a" stroke-width="1.4" stroke-linejoin="round"/><path d="M9 6v4.5" stroke="#e8844a" stroke-width="1.6"/><circle cx="9" cy="12.5" r="0.9" fill="#e8844a"/></svg>
  <div class="t" style="left:52px;top:777px;font-size:12.6px;line-height:16px;color:#e3e3e3">No warni...</div>
  <svg style="left:14px;top:802px" width="6" height="9" viewBox="0 0 6 9"><path d="M0.5 0.5l5 4-5 4z" fill="#c4c4c4"/></svg>
  <svg style="left:28px;top:798px" width="16" height="16" viewBox="0 0 16 16"><circle cx="8" cy="8" r="7.2" fill="none" stroke="#7cacf8" stroke-width="1.3"/><path d="M8 6.8v5" stroke="#7cacf8" stroke-width="1.6"/><circle cx="8" cy="4.5" r="1" fill="#7cacf8"/></svg>
  <div class="t" style="left:52px;top:799px;font-size:12.6px;line-height:16px;color:#e3e3e3">4 info</div>
  <svg style="left:29px;top:820px" width="14" height="16" viewBox="0 0 14 16"><ellipse cx="7" cy="9" rx="4" ry="5" fill="none" stroke="#c4c4c4" stroke-width="1.4"/><path d="M3 7h8M3 10h8M0.5 7h2M11.5 7h2M0.5 11h2M11.5 11h2M4.5 3.5L3 1.5M9.5 3.5L11 1.5" stroke="#c4c4c4" stroke-width="1.2"/></svg>
  <div class="t" style="left:52px;top:821px;font-size:12.6px;line-height:16px;color:#e3e3e3">No verbose</div>
  <!-- console messages -->
  <div class="t mono" style="left:154px;top:707px;font-size:11px;line-height:14px;color:#e3e3e3">Hello from bai1.js!</div>
  <div class="t mono" style="left:628px;top:707px;font-size:11px;line-height:14px;color:#a8c7fa;text-decoration:underline">bai1.js:1</div>
  <svg style="left:137px;top:731px" width="8" height="10" viewBox="0 0 8 10"><path d="M1.5 1.5L5.5 5l-4 3.5" fill="none" stroke="#7cacf8" stroke-width="1.3"/></svg>
</div>
<div class="a" style="left:1183px;top:14px;width:50px;height:954px;background:linear-gradient(90deg,rgba(0,0,0,0.24),rgba(0,0,0,0.09) 30%,rgba(0,0,0,0.03) 60%,rgba(0,0,0,0))"></div>

</body></html>
